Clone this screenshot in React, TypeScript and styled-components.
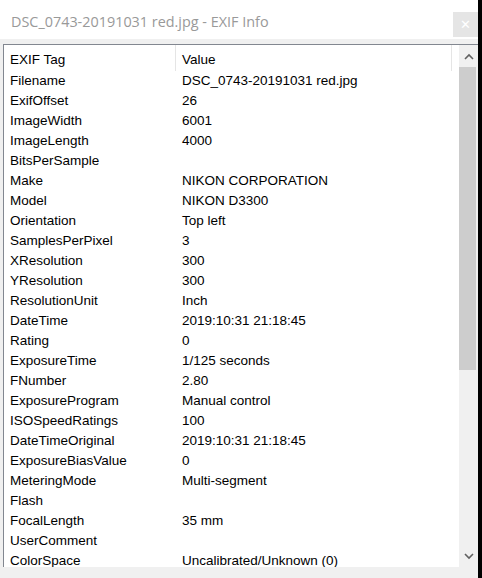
import React from "react";
import styled, { createGlobalStyle } from "styled-components";

const GlobalStyle = createGlobalStyle`
  html, body { margin: 0; padding: 0; background: #000; }
  body { font-family: "Segoe UI", "Liberation Sans", Arial, sans-serif; }
`;

const rows: [string, string][] = [
  ["Filename", "DSC_0743-20191031 red.jpg"],
  ["ExifOffset", "26"],
  ["ImageWidth", "6001"],
  ["ImageLength", "4000"],
  ["BitsPerSample", ""],
  ["Make", "NIKON CORPORATION"],
  ["Model", "NIKON D3300"],
  ["Orientation", "Top left"],
  ["SamplesPerPixel", "3"],
  ["XResolution", "300"],
  ["YResolution", "300"],
  ["ResolutionUnit", "Inch"],
  ["DateTime", "2019:10:31 21:18:45"],
  ["Rating", "0"],
  ["ExposureTime", "1/125 seconds"],
  ["FNumber", "2.80"],
  ["ExposureProgram", "Manual control"],
  ["ISOSpeedRatings", "100"],
  ["DateTimeOriginal", "2019:10:31 21:18:45"],
  ["ExposureBiasValue", "0"],
  ["MeteringMode", "Multi-segment"],
  ["Flash", ""],
  ["FocalLength", "35 mm"],
  ["UserComment", ""],
  ["ColorSpace", "Uncalibrated/Unknown (0)"],
];

const Window = styled.div`
  width: 478px;
  height: 578px;
  background: #f0f0f0;
  display: flex;
  flex-direction: column;
  overflow: hidden;
`;

const TitleBar = styled.div`
  height: 39px;
  flex: none;
  background: #fff;
  display: flex;
  align-items: center;
  justify-content: space-between;
  padding-left: 11px;
`;

const Title = styled.span`
  font-family: "Open Sans", "Noto Sans", sans-serif;
  font-size: 14.4px;
  color: #999;
  margin-top: 4px;
`;

const CloseButton = styled.div`
  width: 25px;
  height: 25px;
  margin-top: 10px;
  background: #e5e5e5;
  color: #fff;
  display: flex;
  align-items: center;
  justify-content: center;
  font-size: 13px;
`;

const Body = styled.div`
  flex: 1;
  padding: 5px 0 11px 3px;
  display: flex;
  min-height: 0;
`;

const ListView = styled.div`
  flex: 1;
  display: flex;
  border-top: 1px solid #828790;
  border-left: 1px solid #828790;
  background: #fff;
  min-height: 0;
`;

const Table = styled.div`
  flex: 1;
  overflow: hidden;
  font-size: 13.5px;
  color: #000;
`;

const Row = styled.div<{ $header?: boolean }>`
  display: grid;
  grid-template-columns: 172px 276px 1fr;
  height: ${(p) => (p.$header ? 26 : 20)}px;
  align-items: center;
  line-height: 20px;
`;

const Cell = styled.div<{ $sep?: boolean; $header?: boolean }>`
  padding-left: 6px;
  height: 100%;
  display: flex;
  align-items: center;
  white-space: nowrap;
  padding-top: ${(p) => (p.$header ? 3 : 0)}px;
  box-sizing: border-box;
  border-right: ${(p) => (p.$sep ? "1px solid #e5e5e5" : "none")};
`;

const ScrollBar = styled.div`
  width: 19px;
  background: #f0f0f0;
  display: flex;
  flex-direction: column;
`;

const Arrow = styled.div`
  height: 22px;
  display: flex;
  align-items: center;
  justify-content: center;
  flex: none;
`;

const Track = styled.div`
  flex: 1;
  display: flex;
  flex-direction: column;
`;

const Thumb = styled.div`
  height: 303px;
  margin: 0 2px 0 0;
  background: #cdcdcd;
`;

const Chevron = ({ up }: { up?: boolean }) => (
  <svg width="10" height="7" viewBox="0 0 10 7">
    <path
      d={up ? "M1 6 L5 2 L9 6" : "M1 1 L5 5 L9 1"}
      fill="none"
      stroke="#606060"
      strokeWidth="1.6"
    />
  </svg>
);

export default function App() {
  return (
    <>
      <GlobalStyle />
      <Window>
        <TitleBar>
          <Title>DSC_0743-20191031 red.jpg - EXIF Info</Title>
          <CloseButton>✕</CloseButton>
        </TitleBar>
        <Body>
          <ListView>
            <Table>
              <Row $header>
                <Cell $sep $header>EXIF Tag</Cell>
                <Cell $sep $header>Value</Cell>
                <Cell $header />
              </Row>
              {rows.map(([tag, value]) => (
                <Row key={tag}>
                  <Cell>{tag}</Cell>
                  <Cell>{value}</Cell>
                  <Cell />
                </Row>
              ))}
            </Table>
            <ScrollBar>
              <Arrow>
                <Chevron up />
              </Arrow>
              <Track>
                <Thumb />
              </Track>
              <Arrow>
                <Chevron />
              </Arrow>
            </ScrollBar>
          </ListView>
        </Body>
      </Window>
    </>
  );
}
